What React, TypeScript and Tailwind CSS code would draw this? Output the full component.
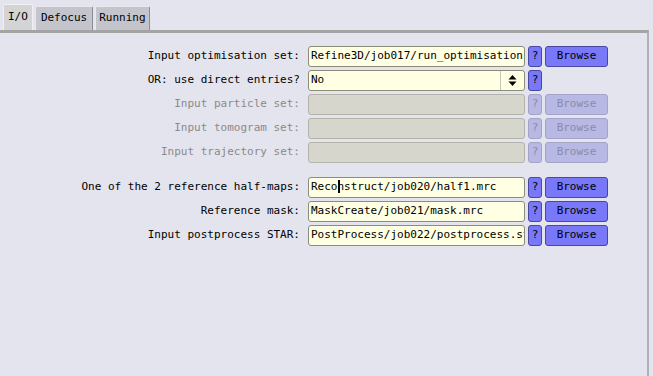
const font = { fontFamily: '"DejaVu Sans Mono", "Liberation Mono", monospace' };

type Row = {
  label: string;
  value?: string;
  caret?: number;
  kind: 'file' | 'choice' | 'disabled';
};

const top: Row[] = [
  { label: 'Input optimisation set:', value: 'Refine3D/job017/run_optimisation', kind: 'file' },
  { label: 'OR: use direct entries?', value: 'No', kind: 'choice' },
  { label: 'Input particle set:', kind: 'disabled' },
  { label: 'Input tomogram set:', kind: 'disabled' },
  { label: 'Input trajectory set:', kind: 'disabled' },
];

const bottom: Row[] = [
  { label: 'One of the 2 reference half-maps:', value: 'Reconstruct/job020/half1.mrc', caret: 4, kind: 'file' },
  { label: 'Reference mask:', value: 'MaskCreate/job021/mask.mrc', kind: 'file' },
  { label: 'Input postprocess STAR:', value: 'PostProcess/job022/postprocess.star', kind: 'file' },
];

function FieldRow({ row }: { row: Row }) {
  const off = row.kind === 'disabled';
  const v = row.value ?? '';
  return (
    <div className="flex items-center h-[24px]">
      <div className={`w-[308px] pr-[8px] text-right text-[11px] whitespace-nowrap ${off ? 'text-[#8a8a8a]' : 'text-black'}`}>
        {row.label}
      </div>
      <div
        className={`w-[217px] h-[21px] rounded-[3px] border flex items-center overflow-hidden ${
          off ? 'bg-[#d6d6cc] border-[#b4b4aa]' : 'bg-[#ffffe4] border-[#8c8c78]'
        }`}
      >
        <span className="pl-[2px] text-[11px] whitespace-nowrap flex-1 overflow-hidden text-clip">
          {row.caret !== undefined ? (
            <>
              {v.slice(0, row.caret)}
              <span className="inline-block w-[2px] h-[13px] -mr-[2px] bg-black align-middle" />
              {v.slice(row.caret)}
            </>
          ) : (
            v
          )}
        </span>
        {row.kind === 'choice' && (
          <span className="w-[24px] h-full border-l border-[#c8c8b8] flex items-center justify-center">
            <svg width="9" height="13" viewBox="0 0 9 13">
              <path d="M4.5 1 L8.5 5.5 L0.5 5.5 Z" fill="#000" />
              <path d="M4.5 12 L8.5 7.5 L0.5 7.5 Z" fill="#000" />
            </svg>
          </span>
        )}
      </div>
      <div
        className={`ml-[3px] w-[14px] h-[21px] rounded-[3px] border flex items-center justify-center text-[11px] ${
          off ? 'bg-[#b8b8e4] border-[#a4a4c8] text-[#8a8aa8]' : 'bg-[#7878f8] border-[#4848a0] text-black'
        }`}
      >
        ?
      </div>
      {row.kind !== 'choice' && (
        <div
          className={`ml-[3px] w-[63px] h-[21px] rounded-[3px] border flex items-center justify-center text-[11px] ${
            off ? 'bg-[#b8b8e4] border-[#a4a4c8] text-[#8a8aa8]' : 'bg-[#7878f8] border-[#4848a0] text-black'
          }`}
        >
          Browse
        </div>
      )}
    </div>
  );
}

export default function App() {
  return (
    <div className="w-[653px] h-[376px] bg-[#e4e4ee] overflow-hidden flex flex-col" style={font}>
      {/* Tabs */}
      <div className="flex items-end h-[30px] pl-[3px] pt-[4px] gap-[2px]">
        <div className="h-[26px] px-[4px] bg-[#d4d4d4] border-t border-l border-r border-[#f0f0f0] rounded-t-[2px] flex items-center text-[11px]">
          I/O
        </div>
        <div className="h-[24px] px-[5px] bg-[#c4c4cc] border-t border-l border-[#e8e8ee] border-r-[#8c8c94] border-r rounded-t-[2px] flex items-center text-[11px]">
          Defocus
        </div>
        <div className="h-[24px] px-[3px] bg-[#c4c4cc] border-t border-l border-[#e8e8ee] border-r-[#8c8c94] border-r rounded-t-[2px] flex items-center text-[11px]">
          Running
        </div>
      </div>
      {/* Panel */}
      <div className="flex-1 mr-[4px] border-t-[3px] border-[#a4a4a4] border-r-2 border-r-[#b0b0b8]">
        <div className="pt-[11px] flex flex-col">
          {top.map((r) => (
            <FieldRow key={r.label} row={r} />
          ))}
          <div className="h-[11px]" />
          {bottom.map((r) => (
            <FieldRow key={r.label} row={r} />
          ))}
        </div>
      </div>
    </div>
  );
}
